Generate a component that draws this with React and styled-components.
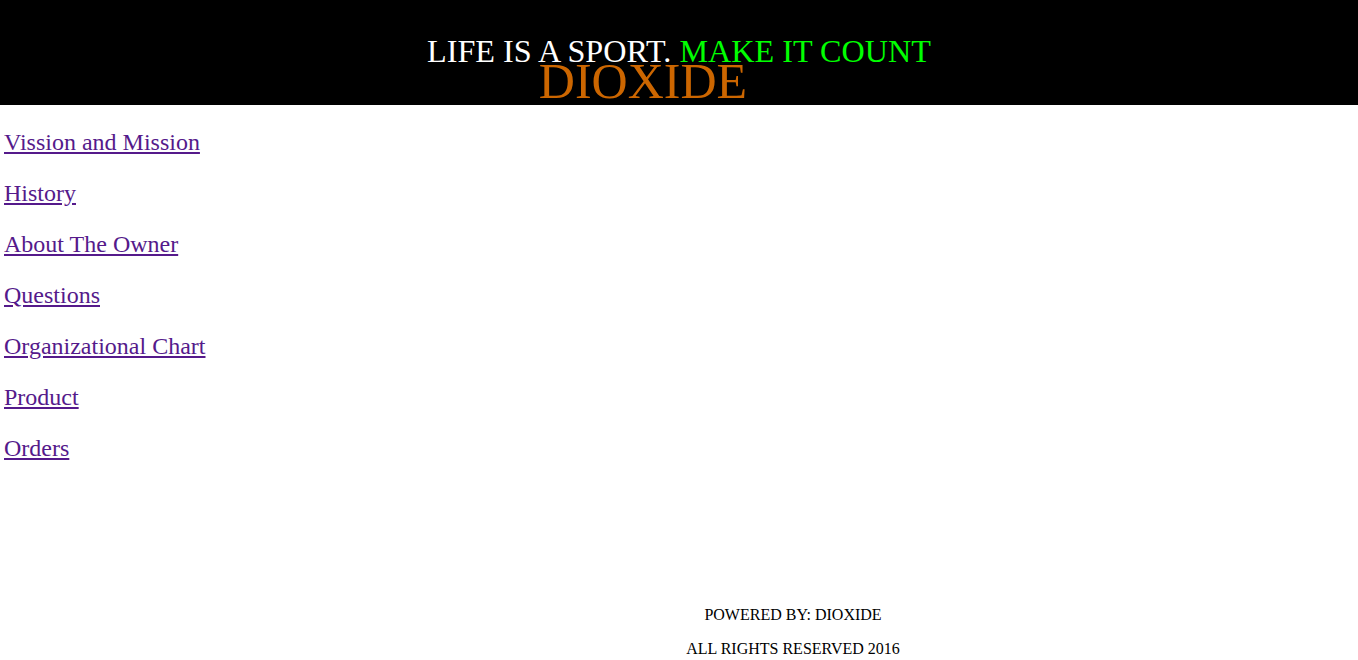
import React from "react";
import styled, { createGlobalStyle } from "styled-components";

const Global = createGlobalStyle`
  html, body { margin: 0; padding: 0; background: #ffffff; }
  body { font-family: "Liberation Serif", "Times New Roman", serif; color: #000; }
`;

const Header = styled.header`
  background: #000000;
  height: 105px;
  box-sizing: border-box;
  padding-top: 35px;
  display: flex;
  flex-direction: column;
  align-items: center;
`;

const Tagline = styled.div`
  font-size: 32.2px;
  line-height: 32px;
  color: #ffffff;
  white-space: nowrap;
`;

const Accent = styled.span`
  color: #00ff00;
`;

const Brand = styled.div`
  font-size: 50px;
  line-height: 29px;
  color: #cc6600;
  margin-right: 72px;
  white-space: nowrap;
`;

const Layout = styled.div`
  display: flex;
  flex-direction: column;
`;

const Nav = styled.nav`
  display: flex;
  flex-direction: column;
  gap: 24px;
  padding: 24px 0 0 4px;
`;

const NavLink = styled.a`
  font-size: 24px;
  line-height: 27px;
  color: #551a8b;
  text-decoration: underline;
  align-self: flex-start;
`;

const Footer = styled.footer`
  display: flex;
  flex-direction: column;
  align-items: center;
  gap: 16px;
  padding-left: 228px;
  margin-top: 144px;
  font-size: 16px;
  line-height: 18px;
`;

const FooterLine = styled.div`
  white-space: nowrap;
`;

const links = [
  "Vission and Mission",
  "History",
  "About The Owner",
  "Questions",
  "Organizational Chart",
  "Product",
  "Orders",
];

export default function App() {
  return (
    <Layout>
      <Global />
      <Header>
        <Tagline>
          LIFE IS A SPORT. <Accent>MAKE IT COUNT</Accent>
        </Tagline>
        <Brand>DIOXIDE</Brand>
      </Header>
      <Nav>
        {links.map((l) => (
          <NavLink key={l} href="#">
            {l}
          </NavLink>
        ))}
      </Nav>
      <Footer>
        <FooterLine>POWERED BY: DIOXIDE</FooterLine>
        <FooterLine>ALL RIGHTS RESERVED 2016</FooterLine>
      </Footer>
    </Layout>
  );
}
